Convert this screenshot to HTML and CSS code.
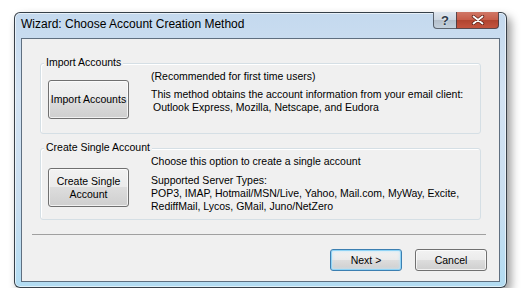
FILE: index.html
```html
<!DOCTYPE html>
<html lang="en">
<head>
    <meta charset="UTF-8" />
    <title>Wizard: Choose Account Creation Method</title>
    <link rel="stylesheet" href="styles.css">
</head>
<body>
    <div class="window">
        <div class="titlebar">
            <span class="title">Wizard: Choose Account Creation Method</span>
            <div class="caption-buttons">
                <span class="cap-btn help">?</span>
                <span class="cap-btn close">
                    <svg width="14" height="10" viewBox="0 0 14 10">
                        <path d="M2.5 1.5 L11.5 8.5 M11.5 1.5 L2.5 8.5" stroke="#5a2118" stroke-width="3.4" stroke-linecap="round" />
                        <path d="M2.5 1.5 L11.5 8.5 M11.5 1.5 L2.5 8.5" stroke="#ffffff" stroke-width="1.8" stroke-linecap="round" />
                    </svg>
                </span>
            </div>
        </div>

        <div class="client">
            <div class="group group-import">
                <div class="group-title">Import Accounts</div>
                <div class="group-body">
                    <button class="btn big">Import Accounts</button>
                    <div class="desc">
                        <p>(Recommended for first time users)</p>
                        <p>This method obtains the account information from your email client:<br><span class="indent">Outlook Express, Mozilla, Netscape, and Eudora</span></p>
                    </div>
                </div>
            </div>

            <div class="group group-single">
                <div class="group-title">Create Single Account</div>
                <div class="group-body">
                    <button class="btn big">Create Single<br>Account</button>
                    <div class="desc">
                        <p>Choose this option to create a single account</p>
                        <p>Supported Server Types:<br>POP3, IMAP, Hotmail/MSN/Live, Yahoo, Mail.com, MyWay, Excite,<br>RediffMail, Lycos, GMail, Juno/NetZero</p>
                    </div>
                </div>
            </div>

            <div class="separator"></div>

            <div class="footer">
                <button class="btn default">Next &gt;</button>
                <button class="btn">Cancel</button>
            </div>
        </div>
    </div>
</body>
</html>
```

FILE: styles.css
```css
body {
    margin: 0;
    padding: 12px 0 0 14px;
    background: #ffffff;
    font-family: 'Liberation Sans', Arial, sans-serif;
    font-size: 10.5px;
    color: #000;
}

.window {
    width: 493px;
    height: 276px;
    box-sizing: border-box;
    border: 1px solid rgba(30, 36, 44, 0.85);
    border-radius: 6px;
    padding: 0 6px 5px 6px;
    background: linear-gradient(180deg, #c4d9ee 0%, #d3e3f3 30%, #c9def0 70%, #b2dcf2 100%);
    box-shadow: 4px 5px 10px rgba(0, 0, 0, 0.4), inset 0 0 0 1px rgba(255, 255, 255, 0.6);
}

.titlebar {
    display: flex;
    align-items: flex-start;
    justify-content: space-between;
    height: 25px;
}

.title {
    padding-top: 4px;
    font-size: 12px;
    line-height: 14px;
    color: #000;
}

.caption-buttons {
    display: flex;
    margin-top: -1px;
    margin-right: 1px;
}

.cap-btn {
    height: 17px;
    box-sizing: border-box;
    border: 1px solid rgba(50, 58, 70, 0.75);
    border-top: none;
    display: flex;
    align-items: center;
    justify-content: center;
}

.help {
    width: 23px;
    border-right: none;
    border-bottom-left-radius: 4px;
    background: linear-gradient(180deg, #dfe6ee 0%, #cdd7e1 50%, #b4bfcb 51%, #c3d0dc 100%);
    color: #2d3a48;
    font-size: 13px;
    font-weight: bold;
    text-shadow: 0 0 2px #fff;
}

.close {
    width: 43px;
    border-bottom-right-radius: 4px;
    background-color: #c04a34;
    background-image: linear-gradient(180deg, rgba(255, 255, 255, 0.25) 0%, rgba(255, 255, 255, 0.1) 50%, rgba(0, 0, 0, 0.08) 51%, rgba(255, 255, 255, 0.05) 100%);
}

.client {
    height: 244px;
    box-sizing: border-box;
    border: 1px solid #5f6f80;
    background: #f0f0f0;
    padding-top: 24px;
}

.group {
    margin: 0 18px;
    border: 1px solid #d5dfe5;
    border-radius: 3px;
    box-shadow: inset 1px 1px 0 #ffffff;
}

.group-title {
    width: fit-content;
    margin: -8px 0 0 3px;
    padding: 0 2px;
    background: #f0f0f0;
    line-height: 13px;
}

.group-body {
    display: flex;
    align-items: flex-start;
    gap: 22px;
    padding-left: 7px;
}

.group-import .group-body {
    padding-bottom: 14px;
}

.group-import .btn {
    margin-top: 11px;
}

.group-import .desc p + p {
    margin-top: 5px;
}

.group-single {
    margin-top: 14px;
}

.group-single .group-body {
    padding-bottom: 6px;
}

.group-single .btn {
    margin-top: 14px;
}

.group-single .desc p + p {
    margin-top: 6px;
}

.desc {
    margin-top: 1px;
}

.desc p {
    margin: 0;
    line-height: 13px;
}

.indent {
    padding-left: 2px;
}

.btn {
    width: 72px;
    height: 22px;
    padding: 0;
    border: 1px solid #707070;
    border-radius: 3px;
    background: linear-gradient(180deg, #f2f2f2 0%, #ebebeb 49%, #dddddd 50%, #cfcfcf 100%);
    box-shadow: inset 0 0 0 1px rgba(255, 255, 255, 0.7);
    font-family: inherit;
    font-size: 10.5px;
    line-height: 13px;
    color: #000;
}

.btn.big {
    width: 81px;
    height: 39px;
    flex-shrink: 0;
}

.btn.default {
    border-color: #3c7fb1;
    box-shadow: inset 0 0 0 1px #8fd3f5, inset 0 0 3px 1px #bfe6fa;
}

.separator {
    margin: 14px 13px 0 10px;
    height: 1px;
    background: #a0a0a0;
}

.footer {
    display: flex;
    justify-content: flex-end;
    gap: 13px;
    padding: 14px 12px 0 0;
}
```
